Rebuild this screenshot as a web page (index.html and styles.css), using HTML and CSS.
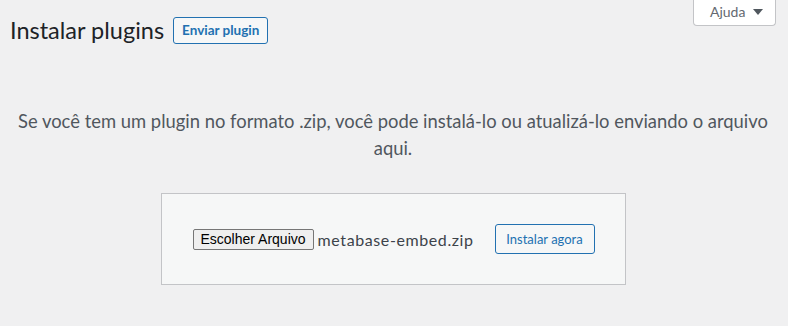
FILE: index.html
```html
<!DOCTYPE html>
<html lang="pt-BR">
<head>
<meta charset="utf-8">
<title>Instalar plugins</title>
<link rel="stylesheet" href="styles.css">
</head>
<body>
  <div class="screen-meta-links">
    <button class="help-tab" type="button">Ajuda <span class="caret"></span></button>
  </div>
  <div class="wrap">
    <div class="title-row">
      <h1 class="page-title">Instalar plugins</h1>
      <a class="page-title-action" href="#">Enviar plugin</a>
    </div>
    <p class="install-help">Se você tem um plugin no formato .zip, você pode instalá-lo ou atualizá-lo enviando o arquivo aqui.</p>
    <div class="form-holder">
      <form class="upload-form">
        <div class="file-input">
          <span class="file-btn">Escolher Arquivo</span>
          <span class="file-name">metabase-embed.zip</span>
        </div>
        <button class="install-btn" type="button">Instalar agora</button>
      </form>
    </div>
  </div>
</body>
</html>
```

FILE: styles.css
```css
html, body {
  margin: 0;
  padding: 0;
}
body {
  background: #f0f0f1;
  color: #3c434a;
  font-family: Lato, "Noto Sans", sans-serif;
  font-size: 13px;
  height: 326px;
  overflow: hidden;
}
.screen-meta-links {
  float: right;
  margin-right: 12px;
}
.help-tab {
  display: flex;
  align-items: center;
  gap: 4px;
  box-sizing: border-box;
  height: 26px;
  width: 83px;
  padding: 0 0 2px 16px;
  border: 1px solid #c3c4c7;
  border-top: none;
  border-radius: 0 0 4px 4px;
  background: #fff;
  color: #646970;
  font-family: inherit;
  font-size: 14px;
}
.caret {
  width: 0;
  height: 0;
  border-left: 5px solid transparent;
  border-right: 5px solid transparent;
  border-top: 6px solid #50575e;
  margin-left: 4px;
}
.wrap {
  padding: 0 12px 0 10px;
}
.title-row {
  display: flex;
  align-items: center;
  gap: 9px;
  padding-top: 15px;
}
.page-title {
  margin: 0;
  font-size: 23.5px;
  font-weight: 400;
  line-height: 31px;
  color: #1d2327;
}
.page-title-action {
  display: inline-block;
  box-sizing: border-box;
  height: 27px;
  line-height: 25px;
  padding: 0 8px;
  border: 1px solid #2271b1;
  border-radius: 3px;
  background: #f6f7f7;
  color: #2271b1;
  font-size: 13.5px;
  font-weight: 700;
  text-decoration: none;
  white-space: nowrap;
}
.install-help {
  margin: 62px 0 0;
  text-align: center;
  font-size: 18.4px;
  line-height: 27px;
  color: #50575e;
}
.form-holder {
  display: flex;
  justify-content: center;
  margin-top: 31px;
}
.upload-form {
  display: flex;
  align-items: center;
  justify-content: space-between;
  box-sizing: border-box;
  width: 465px;
  padding: 30px 30px 30px 31px;
  background: #f6f7f7;
  border: 1px solid #c3c4c7;
  margin: 0;
}
.file-input {
  display: flex;
  align-items: center;
  gap: 4px;
}
.file-btn {
  box-sizing: border-box;
  height: 21px;
  padding: 0 7px;
  border: 1px solid #767676;
  border-radius: 2px;
  background: #efefef;
  color: #000;
  font-family: "Liberation Sans", Arial, sans-serif;
  font-size: 14px;
  line-height: 19px;
  white-space: nowrap;
}
.file-name {
  font-size: 16px;
  letter-spacing: 0.6px;
  color: #3c434a;
  white-space: nowrap;
}
.install-btn {
  box-sizing: border-box;
  height: 30px;
  width: 100px;
  padding: 0 10px;
  border: 1px solid #2271b1;
  border-radius: 3px;
  background: #f6f7f7;
  color: #2271b1;
  font-family: inherit;
  font-size: 13px;
  white-space: nowrap;
}
```
